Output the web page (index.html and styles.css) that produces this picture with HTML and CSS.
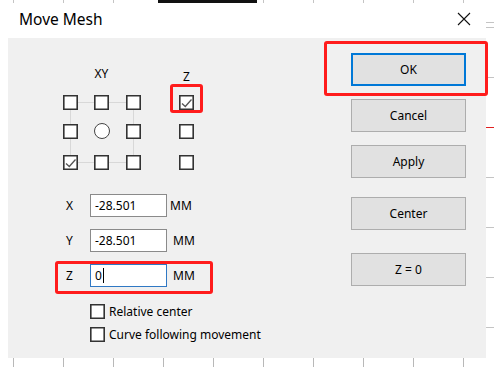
FILE: index.html
```html
<!DOCTYPE html>
<html lang="en">
<head>
    <meta charset="UTF-8">
    <meta name="viewport" content="width=device-width, initial-scale=1.0">
    <title>Move Mesh</title>
    <link rel="stylesheet" href="styles.css">
</head>
<body>

<div class="screen">
    <div class="strip-top"></div>
    <div class="gutter"></div>

    <div class="dialog">
        <div class="titlebar">
            <span class="title">Move Mesh</span>
            <svg class="close" width="14" height="14" viewBox="0 0 14 14">
                <path d="M1 1L13 13M13 1L1 13" stroke="#111" stroke-width="1.1" fill="none"/>
            </svg>
        </div>

        <div class="content">
            <div class="left">
                <div class="picker">
                    <span class="axis axis-xy">XY</span>
                    <span class="axis axis-z">Z</span>
                    <span class="guide"></span>

                    <span class="box r1 c1"></span>
                    <span class="box r1 c2"></span>
                    <span class="box r1 c3"></span>
                    <span class="box r1 c4 checked">
                        <svg width="13" height="13" viewBox="0 0 13 13"><path d="M2 7.5L5.3 10.5L11.5 3.5" stroke="#555" stroke-width="1.3" fill="none"/></svg>
                    </span>

                    <span class="box r2 c1"></span>
                    <span class="dot r2 c2"></span>
                    <span class="box r2 c3"></span>
                    <span class="box r2 c4"></span>

                    <span class="box r3 c1 checked">
                        <svg width="13" height="13" viewBox="0 0 13 13"><path d="M2 7.5L5.3 10.5L11.5 3.5" stroke="#555" stroke-width="1.3" fill="none"/></svg>
                    </span>
                    <span class="box r3 c2"></span>
                    <span class="box r3 c3"></span>
                    <span class="box r3 c4"></span>
                </div>

                <div class="fields">
                    <div class="field">
                        <span class="field-label">X</span>
                        <span class="entry">-28.501</span>
                        <span class="unit unit-x">MM</span>
                    </div>
                    <div class="field">
                        <span class="field-label">Y</span>
                        <span class="entry">-28.501</span>
                        <span class="unit">MM</span>
                    </div>
                    <div class="field">
                        <span class="field-label">Z</span>
                        <span class="entry entry-focus">0<span class="caret"></span></span>
                        <span class="unit">MM</span>
                    </div>
                </div>

                <div class="options">
                    <label class="option"><span class="box"></span>Relative center</label>
                    <label class="option"><span class="box"></span>Curve following movement</label>
                </div>
            </div>

            <div class="buttons">
                <button class="btn btn-default">OK</button>
                <button class="btn">Cancel</button>
                <button class="btn">Apply</button>
                <button class="btn btn-center">Center</button>
                <button class="btn btn-zero">Z = 0</button>
            </div>
        </div>
    </div>

    <div class="strip-right"></div>
    <div class="strip-bottom"></div>

    <!-- red annotation frames -->
    <div class="mark mark-zbox"></div>
    <div class="mark mark-zrow"></div>
    <div class="mark mark-ok"></div>
</div>

</body>
</html>
```

FILE: styles.css
```css
body {
    margin: 0;
    background-color: #fff;
    font-family: "Noto Sans", "Open Sans", sans-serif;
    font-size: 12px;
    color: #000;
}
.screen {
    position: relative;
    width: 494px;
    height: 367px;
    display: grid;
    grid-template-columns: 8px 478px 8px;
    grid-template-rows: 3px 355px 9px;
    overflow: hidden;
}
.strip-top {
    grid-column: 1 / 4;
    background:
        linear-gradient(#111, #111) no-repeat 158px 0 / 99px 100%,
        repeating-linear-gradient(90deg, #c4c4c4 0 1px, transparent 1px 50px) 13px 0;
}
.gutter {
    grid-column: 1;
    grid-row: 2;
}
.strip-right {
    grid-column: 3;
    grid-row: 2;
    background:
        linear-gradient(#e02020, #e02020) no-repeat 0 124px / 100% 1px,
        repeating-linear-gradient(180deg, #c4c4c4 0 1px, transparent 1px 50px) 0 24px;
}
.strip-bottom {
    grid-column: 1 / 4;
    grid-row: 3;
    background: repeating-linear-gradient(90deg, #b8b8b8 0 1px, transparent 1px 50px) 13px 0;
}

.dialog {
    grid-column: 2;
    grid-row: 2;
    display: flex;
    flex-direction: column;
}
.titlebar {
    height: 35px;
    background-color: #fff;
    display: flex;
    align-items: center;
    padding: 0 15px 0 11px;
}
.title {
    flex: 1;
    font-size: 15.5px;
    margin-top: -3px;
}
.close {
    margin-top: -3px;
}
.content {
    flex: 1;
    background-color: #f0f0f0;
    display: flex;
    padding-top: 15px;
}
.left {
    flex: 1;
    padding-top: 13px;
}

/* anchor picker */
.picker {
    margin-left: 55px;
    display: grid;
    grid-template-columns: 31px 32px 53px 15px;
    grid-template-rows: 29px 29px 31px 15px;
}
.axis {
    grid-row: 1;
    width: 15px;
    line-height: 16px;
    display: flex;
    justify-content: center;
    align-self: start;
    white-space: nowrap;
}
.axis-xy {
    grid-column: 2;
}
.axis-z {
    grid-column: 4;
    margin-top: 3px;
}
.guide {
    grid-column: 1 / 4;
    grid-row: 2 / 5;
    margin: 7px 0 0 7px;
    width: 64px;
    height: 61px;
    box-sizing: border-box;
    border: 1px solid #d8d8d8;
    justify-self: start;
    align-self: start;
}
.box {
    width: 15px;
    height: 15px;
    box-sizing: border-box;
    border: 1px solid #333;
    box-shadow: inset 0 0 0 0.6px #333;
    background-color: #fff;
    display: flex;
    align-items: center;
    justify-content: center;
}
.picker .box, .dot {
    align-self: start;
    justify-self: start;
    position: relative;
}
.dot {
    width: 16px;
    height: 16px;
    box-sizing: border-box;
    border: 1px solid #444;
    border-radius: 50%;
    background-color: #fff;
    margin-top: -1px;
}
.r1 { grid-row: 2; }
.r2 { grid-row: 3; }
.r3 { grid-row: 4; }
.c1 { grid-column: 1; }
.c2 { grid-column: 2; }
.c3 { grid-column: 3; }
.c4 { grid-column: 4; }

/* coordinate inputs */
.fields {
    margin-top: 24px;
    display: flex;
    flex-direction: column;
    gap: 12px;
}
.field {
    display: flex;
    align-items: center;
    margin-left: 58px;
}
.field-label {
    width: 24px;
}
.entry {
    width: 77px;
    height: 23px;
    box-sizing: border-box;
    border: 1px solid #8a8a8a;
    background-color: #fff;
    padding-left: 4px;
    line-height: 20px;
    display: flex;
    align-items: center;
}
.entry-focus {
    border-color: #2f78c4;
}
.caret {
    width: 1px;
    height: 15px;
    background-color: #000;
    margin-left: 1px;
}
.unit {
    margin-left: 6px;
}
.unit-x {
    margin-left: 3px;
}

/* check options */
.options {
    margin: 17px 0 0 82px;
    display: flex;
    flex-direction: column;
    gap: 8px;
}
.option {
    display: flex;
    align-items: center;
    gap: 4px;
    line-height: 15px;
}

/* right buttons */
.buttons {
    width: 115px;
    margin-right: 20px;
    display: flex;
    flex-direction: column;
    gap: 13px;
}
.btn {
    height: 33px;
    box-sizing: border-box;
    font-family: inherit;
    font-size: 12px;
    color: #000;
    background-color: #e1e1e1;
    border: 1px solid #adadad;
    padding: 0;
}
.btn-default {
    border: 2px solid #0078d7;
}
.btn-center {
    margin-top: 6px;
}
.btn-zero {
    margin-top: 10px;
}

/* annotation frames */
.mark {
    position: absolute;
    box-sizing: border-box;
    border: 3px solid #ff1c1c;
    border-radius: 3px;
}
.mark-zbox {
    left: 170px;
    top: 84px;
    width: 33px;
    height: 29px;
}
.mark-zrow {
    left: 55px;
    top: 261px;
    width: 158px;
    height: 33px;
}
.mark-ok {
    left: 324px;
    top: 41px;
    width: 164px;
    height: 55px;
}
```
